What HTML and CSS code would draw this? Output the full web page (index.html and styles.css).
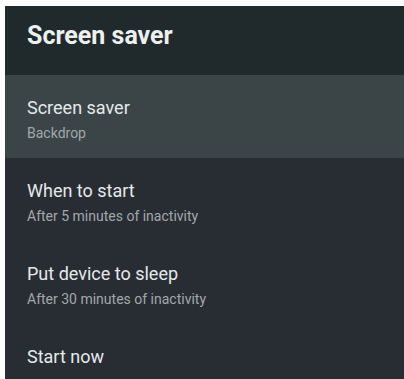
FILE: index.html
```html
<!DOCTYPE html>
<html>
<head>
<meta charset="utf-8">
<link rel="stylesheet" href="styles.css">
</head>
<body>
<div class="panel">
  <div class="header"><h1 class="header-title">Screen saver</h1></div>
  <div class="list">
    <div class="row selected">
      <div class="title">Screen saver</div>
      <div class="sub">Backdrop</div>
    </div>
    <div class="row">
      <div class="title">When to start</div>
      <div class="sub">After 5 minutes of inactivity</div>
    </div>
    <div class="row">
      <div class="title">Put device to sleep</div>
      <div class="sub">After 30 minutes of inactivity</div>
    </div>
    <div class="row">
      <div class="title">Start now</div>
    </div>
  </div>
</div>
</body>
</html>
```
FILE: styles.css
```css
html, body {
  margin: 0;
  padding: 0;
  background: #ffffff;
  height: 100%;
  overflow: hidden;
}
body {
  padding: 6px 0 0 5px;
  box-sizing: border-box;
  font-family: Roboto, "Liberation Sans", sans-serif;
}
.panel {
  background: #282d34;
  height: 100%;
  display: flex;
  flex-direction: column;
  overflow: hidden;
}
.header {
  flex-shrink: 0;
  background: #202a2c;
  height: 69px;
  box-sizing: border-box;
  padding: 15px 22px 0;
}
.header-title {
  margin: 0;
  font-size: 25px;
  line-height: 30px;
  font-weight: 700;
  color: #eef0f0;
}
.list {
  flex-shrink: 0;
}
.row {
  height: 83px;
  box-sizing: border-box;
  padding: 22px 22px 0;
}
.row.selected {
  background: #3b4446;
}
.title {
  font-size: 18px;
  line-height: 22px;
  color: #e6e9ea;
}
.sub {
  margin-top: 5px;
  font-size: 14px;
  line-height: 18px;
  color: #a2a8aa;
}
```
